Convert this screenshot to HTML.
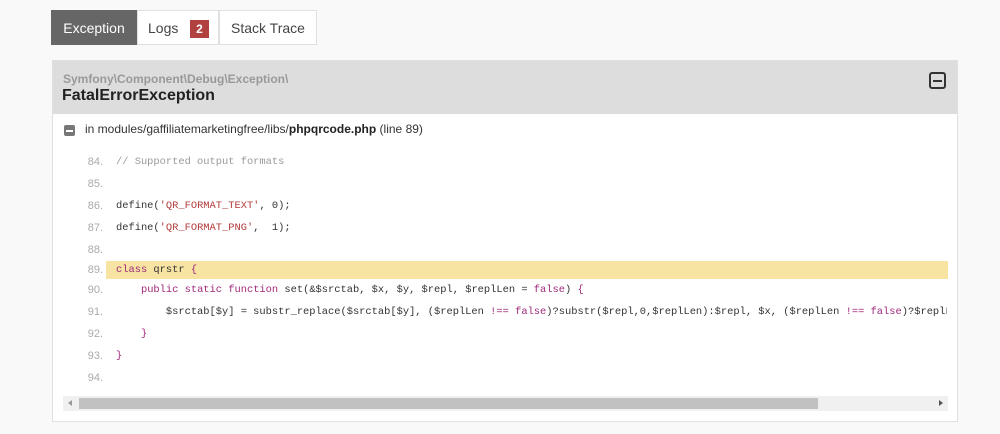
<!DOCTYPE html>
<html><head><style>
body{margin:0;background:#f9f9f9;font-family:"Liberation Sans",Arial,sans-serif;width:1000px;height:434px;overflow:hidden;position:relative}
.tab{position:absolute;top:10px;height:35px;line-height:35px;font-size:14px;box-sizing:border-box;text-align:center;color:#444;background:#fff;border:1px solid #e0e0e0}
.panel{position:absolute;left:52px;top:60px;width:906px;height:362px;background:#fff;border:1px solid #e0e0e0;box-sizing:border-box}
.hdr{height:53px;background:#ddd;position:relative}
.ns{position:absolute;left:10px;top:11px;font-size:12px;color:#999;font-weight:bold}
.cls{position:absolute;left:9px;top:26px;font-size:16px;color:#222;font-weight:bold}
.code{position:absolute;left:0;font-family:"Liberation Mono",monospace;font-size:10.4px;height:18px;line-height:18px;white-space:pre;color:#333}
.n{position:absolute;left:16px;width:34px;text-align:right;color:#aaa;font-family:"Liberation Sans",sans-serif;font-size:11px}
.t{position:absolute;left:63px}
.k{color:#a0287a}.s{color:#b23a3a}.c{color:#999}.p{color:#a0287a}
</style></head><body>
<div class="tab" style="left:51px;width:86px;background:#666;color:#fff;border-color:#666">Exception</div>
<div class="tab" style="left:137px;width:82px;text-align:left;padding-left:10px">Logs <span style="position:absolute;left:52px;top:9px;width:19px;height:18px;line-height:18px;background:#b0413e;color:#fff;font-weight:bold;font-size:12px;text-align:center">2</span></div>
<div class="tab" style="left:219px;width:98px">Stack Trace</div>
<div class="panel">
<div class="hdr"><div class="ns">Symfony\Component\Debug\Exception\</div><div class="cls">FatalErrorException</div>
<div style="position:absolute;left:876px;top:11px;width:13px;height:13px;border:2px solid #333;border-radius:3px"><div style="position:absolute;left:2px;right:2px;top:5.5px;height:2px;background:#333"></div></div></div>
<div style="position:absolute;left:11px;top:64px;width:11px;height:11px;background:#777;border-radius:2px"><div style="position:absolute;left:2px;right:2px;top:5px;height:1.5px;background:#fff"></div></div>
<div style="position:absolute;left:32px;top:61px;font-size:12px;color:#333">in modules/gaffiliatemarketingfree/libs/<b style="color:#222">phpqrcode.php</b> (line 89)</div>
<div style="position:absolute;left:53px;top:200px;width:842px;height:18px;background:#f7e4a3"></div>
<div class="code" style="top:92px"><span class="n">84.</span><span class="t c">// Supported output formats</span></div>
<div class="code" style="top:114px"><span class="n">85.</span></div>
<div class="code" style="top:136px"><span class="n">86.</span><span class="t">define(<span class="s">'QR_FORMAT_TEXT'</span>, 0);</span></div>
<div class="code" style="top:158px"><span class="n">87.</span><span class="t">define(<span class="s">'QR_FORMAT_PNG'</span>,  1);</span></div>
<div class="code" style="top:180px"><span class="n">88.</span></div>
<div class="code" style="top:200px"><span class="n">89.</span><span class="t"><span class="k">class</span> qrstr <span class="p">{</span></span></div>
<div class="code" style="top:220px"><span class="n">90.</span><span class="t">    <span class="k">public static function</span> set(&amp;$srctab, $x, $y, $repl, $replLen = <span class="k">false</span>) <span class="p">{</span></span></div>
<div class="code" style="top:242px;width:894px;overflow:hidden"><span class="n">91.</span><span class="t">        $srctab[$y] = substr_replace($srctab[$y], ($replLen <span class="k">!==</span> <span class="k">false</span>)?substr($repl,0,$replLen):$repl, $x, ($replLen <span class="k">!==</span> <span class="k">false</span>)?$replLen:strlen($repl));</span></div>
<div class="code" style="top:264px"><span class="n">92.</span><span class="t">    <span class="p">}</span></span></div>
<div class="code" style="top:286px"><span class="n">93.</span><span class="t"><span class="p">}</span></span></div>
<div class="code" style="top:308px"><span class="n">94.</span></div>
<div style="position:absolute;left:10px;top:335px;width:885px;height:15px;background:#f0f0f0"><div style="position:absolute;left:16px;width:739px;top:2px;height:11px;background:#c1c1c1"></div>
<div style="position:absolute;left:5px;top:4px;border:3.5px solid transparent;border-right:4px solid #999;border-left:0"></div>
<div style="position:absolute;right:5px;top:4px;border:3.5px solid transparent;border-left:4px solid #555;border-right:0"></div></div>
</div>
</body></html>
